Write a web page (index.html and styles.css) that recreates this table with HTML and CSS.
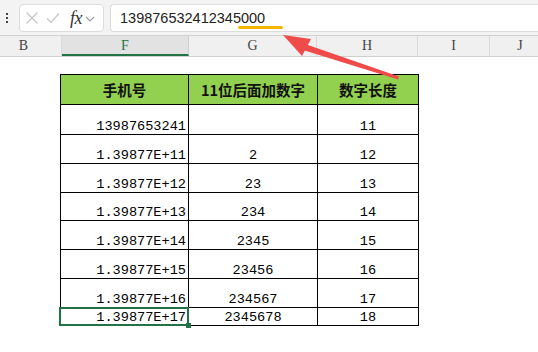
FILE: index.html
```html
<!DOCTYPE html>
<html>
<head>
<meta charset="utf-8">
<link rel="stylesheet" href="styles.css">
</head>
<body>
<div class="app">
  <div class="toolbar">
    <div class="kebab"><i></i><i></i><i></i></div>
    <div class="namebox">
      <svg class="ico" width="14" height="14" viewBox="0 0 14 14"><path d="M1.5 1.5 L12.5 12.5 M12.5 1.5 L1.5 12.5" stroke="#c4c4c4" stroke-width="1.2" fill="none"/></svg>
      <svg class="ico" width="14" height="14" viewBox="0 0 14 14"><path d="M1 7.5 L5 11.5 L13 2.5" stroke="#c4c4c4" stroke-width="1.2" fill="none"/></svg>
      <span class="fx">fx</span>
      <svg class="chev" width="10" height="8" viewBox="0 0 10 8"><path d="M1 2 L5 6 L9 2" stroke="#9a9a9a" stroke-width="1.1" fill="none"/></svg>
    </div>
    <div class="formula"><span class="ftext">139876532412345000</span><span class="mark"></span></div>
  </div>
  <div class="colheads">
    <div class="ch cb">B</div>
    <div class="ch cf">F</div>
    <div class="ch cg">G</div>
    <div class="ch chh">H</div>
    <div class="ch ci">I</div>
    <div class="ch cj">J</div>
  </div>
  <div class="sheet">
    <table class="grid">
      <colgroup><col class="w1"><col class="w2"><col class="w3"></colgroup>
      <thead>
        <tr class="hd"><th>手机号</th><th>11位后面加数字</th><th>数字长度</th></tr>
      </thead>
      <tbody>
        <tr class="r30"><td class="num">13987653241</td><td class="mid"></td><td class="mid">11</td></tr>
        <tr><td class="num">1.39877E+11</td><td class="mid">2</td><td class="mid">12</td></tr>
        <tr><td class="num">1.39877E+12</td><td class="mid">23</td><td class="mid">13</td></tr>
        <tr class="r28"><td class="num">1.39877E+13</td><td class="mid">234</td><td class="mid">14</td></tr>
        <tr><td class="num">1.39877E+14</td><td class="mid">2345</td><td class="mid">15</td></tr>
        <tr><td class="num">1.39877E+15</td><td class="mid">23456</td><td class="mid">16</td></tr>
        <tr><td class="num">1.39877E+16</td><td class="mid">234567</td><td class="mid">17</td></tr>
        <tr class="last"><td class="num sel">1.39877E+17</td><td class="mid">2345678</td><td class="mid">18</td></tr>
      </tbody>
    </table>
  </div>
  <svg class="arrow" width="538" height="352" viewBox="0 0 538 352">
    <polygon points="283,35 311,39 302,56" fill="#f04b4b"/>
    <polygon points="305,44 399,76.5 398,79.5 303,50" fill="#f04b4b"/>
  </svg>
</div>
</body>
</html>
```
FILE: styles.css
```css
* { box-sizing: border-box; }
html, body { margin: 0; padding: 0; background: #fff; }
.app { position: relative; width: 538px; height: 352px; overflow: hidden; font-family: "Liberation Sans", Arial, sans-serif; }

.toolbar { height: 35px; background: #f3f3f3; display: flex; align-items: flex-start; padding-top: 4px; }
.kebab { width: 19px; height: 28px; display: flex; flex-direction: column; align-items: center; justify-content: center; gap: 2px; padding-right: 5px; flex-shrink: 0; }
.kebab i { display: block; width: 2px; height: 2px; background: #444; }
.namebox { width: 85px; height: 28px; flex-shrink: 0; background: #fff; border: 1px solid #dcdcdc; border-radius: 4px; display: flex; align-items: center; padding-left: 5px; }
.ico { margin-right: 7px; }
.ico + .ico { margin-right: 10px; }
.fx { font-family: "Liberation Serif", serif; font-style: italic; font-size: 18px; color: #333; margin-right: 3px; letter-spacing: -0.5px; }
.chev { margin-top: 1px; }
.formula { position: relative; flex: 1; margin-left: 6px; height: 28px; background: #fff; border: 1px solid #dcdcdc; border-right: none; border-radius: 4px 0 0 4px; padding-left: 9px; display: flex; align-items: center; }
.ftext { font-size: 14.5px; color: #222; letter-spacing: 0; }
.mark { position: absolute; left: 127px; top: 21px; width: 45px; height: 3px; border-radius: 2px; background: #f6b400; }

.colheads { height: 22px; background: #f0f0f0; border-top: 1px solid #d2d2d2; border-bottom: 1px solid #cfcfcf; display: flex; }
.ch { flex-shrink: 0; font-family: "Liberation Serif", serif; font-size: 14px; color: #444; text-align: center; line-height: 20px; border-right: 1px solid #dadada; }
.cb { width: 62px; padding-right: 14px; }
.cf { width: 127px; background: #e2e2e2; color: #217346; border-bottom: 2px solid #217346; border-right: 1px solid #cfcfcf; }
.cg { width: 128px; }
.chh { width: 101px; }
.ci { width: 72px; }
.cj { width: 80px; padding-right: 20px; border-right: none; }

.sheet { padding: 17px 0 0 60px; }
.grid { border-collapse: collapse; table-layout: fixed; width: 358px; }
.w1 { width: 128px; }
.w2 { width: 129px; }
.w3 { width: 101px; }
.grid th, .grid td { border: 1px solid #000; padding: 0; }
.hd th { height: 30px; background: #92d050; font-family: "Noto Sans CJK SC", sans-serif; font-weight: 700; font-size: 14.5px; color: #111; text-align: center; vertical-align: middle; }
.grid td { height: 29px; font-family: "Liberation Mono", monospace; font-size: 13.6px; line-height: 13px; color: #000; vertical-align: bottom; padding-bottom: 1px; }
.grid tr.r30 td { height: 30px; }
.grid tr.r28 td { height: 28px; }
.grid tr.last td { height: 18px; }
.num { text-align: right; padding-right: 2px !important; }
.mid { text-align: center; }
.sel { position: relative; }
.sel::after { content: ""; position: absolute; left: -2px; top: -1px; right: -1px; bottom: -1px; border: 2px solid #217346; }
.sel::before { content: ""; position: absolute; right: -3px; bottom: -3px; width: 5px; height: 5px; background: #217346; z-index: 1; }

.arrow { position: absolute; left: 0; top: 0; pointer-events: none; }
```
